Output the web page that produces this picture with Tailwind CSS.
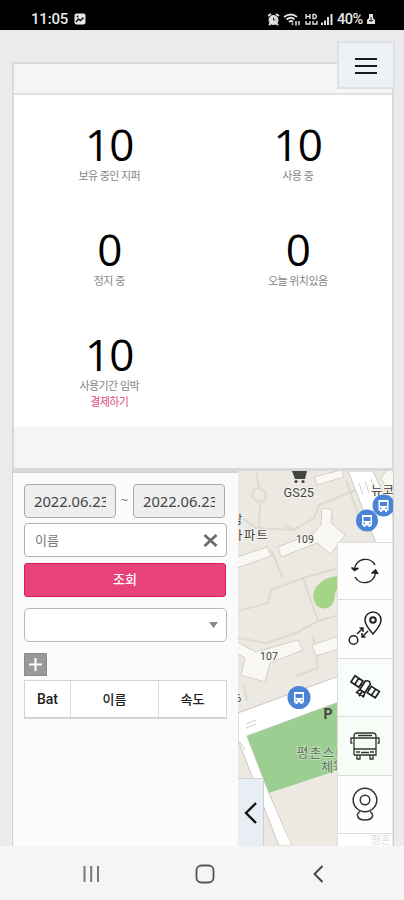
<!DOCTYPE html>
<html lang="ko">
<head>
<meta charset="utf-8">
<title>Dashboard</title>
<script src="https://cdn.jsdelivr.net/npm/@tailwindcss/browser@4"></script>
</head>
<body class="w-[404px] h-[900px] overflow-hidden bg-[#ebebeb] flex flex-col font-['Noto_Sans','Noto_Sans_CJK_KR',sans-serif] text-black">
<header class="h-[30px] shrink-0 bg-black text-[#e8e8e8] flex items-center justify-between pl-[31px] pr-[28px] pt-[8px] font-['Roboto',sans-serif] text-[15px] leading-none font-medium">
  <div class="flex items-center gap-[6px]"><span class="w-[37px] whitespace-nowrap tracking-[-0.2px]">11:05</span>
    <svg width="12" height="12" viewBox="0 0 12 12"><rect x=".5" y=".5" width="11" height="11" rx="2" fill="#e8e8e8"/><path d="M2 9l2.500-3 2 1.500 3-3" fill="none" stroke="#111" stroke-width="1.500"/><circle cx="3.500" cy="3.500" r="1" fill="#111"/></svg>
  </div>
  <div class="flex items-center">
    <svg width="66" height="13" viewBox="0 0 66 13" fill="none" stroke="#dedede">
      <circle cx="5.500" cy="7" r="4.500" fill="#dedede"/><path d="M0 3l3-2M11 3L8 1M1 12l2-2M10 12l-2-2" stroke-width="2"/><path d="M5.500 4.500V7h2" stroke="#222"/>
      <path d="M16 4q7-5 13 0M18.500 6.500q4.500-3.500 8 0M21 9q2-2 4 0" stroke-width="1.800"/><path d="M23.500 11h2M28 12.500V8M31 8v4" stroke-width="1.500"/>
      <path d="M38 1v5M42 1v5M38 3.500h4M45 1.500v4h2q3-2 0-4zM38 8v3h4V8M45 8v3h4V8" stroke-width="1.400"/>
      <path d="M54 12V9.500M57 12V7.500M60 12V4M63.500 12V1" stroke-width="2"/>
    </svg>
    <span class="ml-[3px] w-[28px] text-[14.500px] leading-[16px] pt-[1px] whitespace-nowrap tracking-[-0.5px]">40%</span>
    <svg class="ml-[1px]" width="10" height="12" viewBox="0 0 10 12"><path d="M3 1h4v4l2 2v4H1V7l2-2z" fill="#dedede"/><path d="M3 7.500h4M5 4v5" stroke="#333"/></svg>
  </div>
</header>

<main class="relative h-[816px] shrink-0 pt-[32px] pl-[12px] pr-[10px]">
  <section class="h-[409px] border-2 border-[#d9d9d9] border-b-[3px] bg-[#f5f5f5] flex flex-col">
    <div class="h-[31px] shrink-0 border-b-2 border-[#e2e2e2]"></div>
    <div class="h-[332px] shrink-0 bg-white grid grid-cols-2 auto-rows-[105px] pt-[20px] pl-[1px] text-center text-[11px] tracking-[-0.6px] text-[#858585]">
      <div><div class="text-[44px] leading-[48px] h-[52px] pt-[5px] font-['Open_Sans',sans-serif] tracking-[-1px] text-black">10</div><div class="leading-[17px]">보유 중인 지퍼</div></div>
      <div><div class="text-[44px] leading-[48px] h-[52px] pt-[5px] font-['Open_Sans',sans-serif] tracking-[-1px] text-black">10</div><div class="leading-[17px]">사용 중</div></div>
      <div><div class="text-[44px] leading-[48px] h-[52px] pt-[5px] font-['Open_Sans',sans-serif] tracking-[-1px] text-black">0</div><div class="leading-[17px]">정지 중</div></div>
      <div><div class="text-[44px] leading-[48px] h-[52px] pt-[5px] font-['Open_Sans',sans-serif] tracking-[-1px] text-black">0</div><div class="leading-[17px]">오늘 위치있음</div></div>
      <div><div class="text-[44px] leading-[48px] h-[52px] pt-[5px] font-['Open_Sans',sans-serif] tracking-[-1px] text-black">10</div><div class="leading-[17px]">사용기간 임박</div><div class="leading-[16px] text-[#dc4c7c]">결제하기</div></div>
    </div>
  </section>

  <section class="h-[375px] flex border-x border-[#cfcfcf] overflow-hidden">
    <div class="w-[225px] shrink-0 bg-[#fbfbfb] border-t-2 border-[#d4d4d4] pt-[11px] pl-[11px] pr-[11px]">
      <div class="flex items-center justify-between pr-[2px] text-[14.700px] text-[#444]">
        <div class="w-[92px] h-[34px] rounded-[4px] border border-[#aaa] bg-[#eee] pl-[9px] flex items-center"><span class="w-[72px] overflow-hidden whitespace-nowrap">2022.06.23</span></div>
        <span class="text-[13px] text-[#777]">~</span>
        <div class="w-[92px] h-[34px] rounded-[4px] border border-[#aaa] bg-[#eee] pl-[9px] flex items-center"><span class="w-[72px] overflow-hidden whitespace-nowrap">2022.06.23</span></div>
      </div>
      <div class="mt-[5px] w-[203px] h-[34px] rounded-[4px] border border-[#b0b0b0] bg-white flex items-center justify-between pl-[10px] pr-[8px] text-[13px] text-[#777]"><span class="pt-[2px]">이름</span>
        <svg width="15" height="15" viewBox="0 0 15 15"><path d="M1.500 2l12 11M13.500 2l-12 11" stroke="#6b6b6b" stroke-width="2.800"/></svg>
      </div>
      <div class="mt-[6px] w-[202px] h-[34px] rounded-[3px] border border-[#dc1965] bg-[#e8427b] text-white text-[13px] font-medium flex items-center justify-center">조회</div>
      <div class="mt-[11px] w-[203px] h-[34px] rounded-[5px] border border-[#b8b8b8] bg-white flex items-center justify-end pr-[8px]">
        <svg width="9" height="6" viewBox="0 0 9 6"><path d="M0 0h9L4.500 6z" fill="#888"/></svg>
      </div>
      <div class="mt-[11px] w-[23px] h-[23px] bg-[#999] border border-[#8b8b8b] flex items-center justify-center"><svg width="13" height="13" viewBox="0 0 13 13"><path d="M6.500 0v13M0 6.500h13" stroke="#fff" stroke-width="2"/></svg></div>
      <div class="mt-[4px] w-[203px] h-[39px] border border-[#d4d4d4] border-b-2 bg-white grid grid-cols-[46px_88px_1fr] text-center text-[13px] leading-[37px] text-[#222] divide-x divide-[#dadada]">
        <div class="font-['Roboto',sans-serif] font-medium text-[14px]">Bat</div><div class="font-medium">이름</div><div class="font-medium">속도</div>
      </div>
    </div>

    <div class="relative w-[155px] shrink-0">
      <svg class="block" width="155" height="375" viewBox="238 471 155 375" font-family="Roboto, 'Noto Sans CJK KR', sans-serif" fill="#444">
        <rect x="238" y="471" width="155" height="375" fill="#ece9e2"/>
        <path d="M256 471l3 16M253 491l6-4 7 6-1 7-8 2-5-6zM260 503l-1 25M238 515l18 13 37 2 21-12 5-13 37-15M293 530l-8-5M271 550l12 28M238 611l30-8 3-13 32-12 36-10M303 578l15 43M318 621l-22 12-30 10-28-5M318 621l21-6M313 636l5 32-22 8M334 518l-6-3M346 480l14 40M244 685l3 16" fill="none" stroke="#deDAD2" stroke-width="2"/>
        <path d="M348 471l28 72h17v-28L373 471zM238 713l101-37v26l-92 34 22 57 23 53h-13L238 740z" fill="#fff" stroke="#cbc8c1" stroke-width="1"/>
        <path d="M247 736l92-34v68l-70 23z" fill="#9cce91"/>
        <path d="M270 793l69-23v76h-47z" fill="#eee9e1"/>
        <path d="M339 576q-14 0-23 11-6 10 1 19 7 5 14 0 4-6 4-13l4-7z" fill="#a4d485"/>
        <g fill="#f9f8f3" stroke="#d4d0c6">
          <path d="M314 477l27-7 3 7-27 8zM278 547l36-14 7-8 1-17 10 2-1 13 14 12-14 19-14-11-36 14zM237 557l30-10 4 9-34 12zM237 642l19 10 42-12 5 10-33 13-5 19-24-7 4-17-9-5zM312 645l27-9v13l-23 7zM381 478l6-8h7v15l-8 3z"/>
        </g>
        <path d="M359 483l4 12M365 481l4 12M371 479l3 9M246 724l10-4M246 728l10-4M240 742l5 8" stroke="#d0d0d0"/>
        <path d="M292 471h15l-2 8h-10z" fill="#444"/><circle cx="296" cy="481.500" r="1.600"/><circle cx="303" cy="481.500" r="1.600"/>
        <g stroke="#f7f5ef" stroke-width="2" paint-order="stroke">
          <text x="283.500" y="497" font-size="12.500" textLength="30.500" lengthAdjust="spacingAndGlyphs">GS25</text>
          <text x="296" y="542.500" font-size="10.500" textLength="18">109</text>
          <text x="260" y="659.500" font-size="10.500" textLength="18">107</text>
          <text x="371" y="495" font-size="12.500">뉴코</text>
          <text x="231" y="539.500" font-size="12.500" textLength="37">아파트</text>
          <text x="231" y="524" font-size="12.500">람</text>
          <text x="223" y="702" font-size="11">106</text>
        </g>
        <g stroke="#cbe3c3" stroke-width="1.500" paint-order="stroke" fill="#5d715a">
          <text x="296.500" y="756.500" font-size="13" textLength="64">평촌스마트</text>
          <text x="321" y="770.500" font-size="13">체육관</text>
        </g>
        <text x="323.500" y="719" font-size="14" font-weight="700">P</text>
        <circle cx="383.500" cy="505.500" r="11" fill="#4b83d8"/><circle cx="367" cy="520.500" r="11" fill="#4b83d8"/><circle cx="299" cy="697.500" r="11.500" fill="#4b83d8"/>
        <path fill="#fff" d="M378.500 500h10v10.500h-1.500v1.500h-2v-1.500h-3v1.500h-2v-1.500h-1.500zM362 515h10v10.500h-1.500v1.500h-2v-1.500h-3v1.500h-2v-1.500H362zM294 692h10v10.500h-1.500v1.500h-2v-1.500h-3v1.500h-2v-1.500H294z"/>
        <path fill="#4b83d8" d="M380 502h7v4h-7zM363.500 517h7v4h-7zM295.500 694h7v4h-7zM380 507.500h1.500v1.500H380zM385.500 507.500h1.500v1.500h-1.500zM363.500 522.500h1.500v1.500h-1.500zM369 522.500h1.500v1.500H369zM295.500 699.500h1.500v1.500h-1.500zM301 699.500h1.500v1.500H301z"/>
      </svg>

      <div class="absolute left-[99px] top-[71px] w-[55px] h-[304px] bg-[#fdfefd] border-l border-t border-[#ddd] flex flex-col divide-y divide-[#dcdcdc] overflow-hidden">
        <div class="h-[57px] shrink-0 flex items-center justify-center">
          <svg width="30" height="28" viewBox="0 0 30 28" fill="none" stroke="#222" stroke-width="1.500"><path d="M4.500 12A11 11 0 0 1 25 8M25.500 16A11 11 0 0 1 5 20"/><path d="M1.500 10.500l3 3 4-2.500M21.500 16.500l4-3.500 2.500 4" fill="#222"/></svg>
        </div>
        <div class="h-[59px] shrink-0 flex items-center justify-center">
          <svg width="34" height="36" viewBox="0 0 34 36" fill="none" stroke="#222" stroke-width="1.500"><path d="M25 23q-8-9-8-14a8 8 0 0 1 16 0q0 5-8 14z"/><circle cx="25" cy="9" r="2.800" stroke-width="2"/><circle cx="5.500" cy="29" r="4.300"/><path d="M9 23l6-6M11.500 17H15v4M20 20l-6 6M17.500 26H14v-4"/></svg>
        </div>
        <div class="h-[58px] shrink-0 flex items-center justify-center bg-[#f9fdfb]">
          <svg width="32" height="28" viewBox="0 0 32 28" fill="none" stroke="#222" stroke-width="1.700"><g transform="rotate(33 16 13)"><path d="M1.500 9h9.500v7.500H1.500zM6 9v7.500M21 9h9.500v7.500H21zM26 9v7.500M11 13h2M19 13h2"/><path d="M13 8q3-4 6 0v10h-6zM13 18l-1 4h8l-1-4M16 18v6"/></g></svg>
        </div>
        <div class="h-[59px] shrink-0 flex items-center justify-center bg-[#f7fdf6]">
          <svg width="30" height="28" viewBox="0 0 30 28" fill="none" stroke="#333" stroke-width="1.300"><path d="M4 23V4q0-3 3-3h16q3 0 3 3v19H4M4 17h22M4 6h22M8 3.500h14M6 20h4M20 20h4M4 6H1v5h1.500M26 6h3v5h-1.500M7 23v4h3v-4M20 23v4h3v-4M11 20.500h8"/></svg>
        </div>
        <div class="h-[58px] shrink-0 flex items-center justify-center">
          <svg class="-mt-[2px]" width="26" height="34" viewBox="0 0 26 34" fill="none" stroke="#333" stroke-width="1.500"><circle cx="13" cy="13" r="11.800"/><circle cx="13" cy="13" r="4.800"/><path d="M8 24.500q-3 2-2.500 4.500 1 4 7.500 4t7.500-4q.5-2.500-2.500-4.500"/></svg>
        </div>
        <div class="h-[14px] shrink-0 text-right pr-[1px] text-[11px] leading-[12px] text-[#e0e0e0] overflow-hidden">평촌</div>
      </div>
      <div class="absolute left-0 bottom-0 w-[26px] h-[68px] bg-[#e9eef5] border-t border-r border-[#ccd2d8] flex items-center justify-center">
        <svg width="14" height="22" viewBox="0 0 14 22"><path d="M12 1L2 11l10 10" fill="none" stroke="#111" stroke-width="2.400"/></svg>
      </div>
    </div>
  </section>

  <button class="absolute left-[337px] top-[11px] w-[58px] h-[48px] bg-[#eef1f5] border-2 border-[#dfe2e4] flex flex-col items-center justify-center gap-[5px] pt-[2px]">
    <span class="block w-[22px] h-[2px] bg-[#17171f]"></span><span class="block w-[22px] h-[2px] bg-[#17171f]"></span><span class="block w-[22px] h-[2px] bg-[#17171f]"></span>
  </button>
</main>

<nav class="h-[54px] shrink-0 bg-[#f5f5f5] flex items-center pl-[82px] pt-[1px]">
  <svg width="18" height="18" viewBox="0 0 18 18"><path d="M2.500 1v16M9.200 1v16M16 1v16" stroke="#777" stroke-width="2"/></svg>
  <svg class="ml-[95px]" width="20" height="20" viewBox="0 0 20 20"><rect x="1.500" y="1.500" width="17" height="17" rx="5" fill="none" stroke="#555" stroke-width="1.800"/></svg>
  <svg class="ml-[97px]" width="12" height="18" viewBox="0 0 12 18"><path d="M10.500 1l-8 8 8 8" fill="none" stroke="#444" stroke-width="1.900"/></svg>
</nav>
</body>
</html>
